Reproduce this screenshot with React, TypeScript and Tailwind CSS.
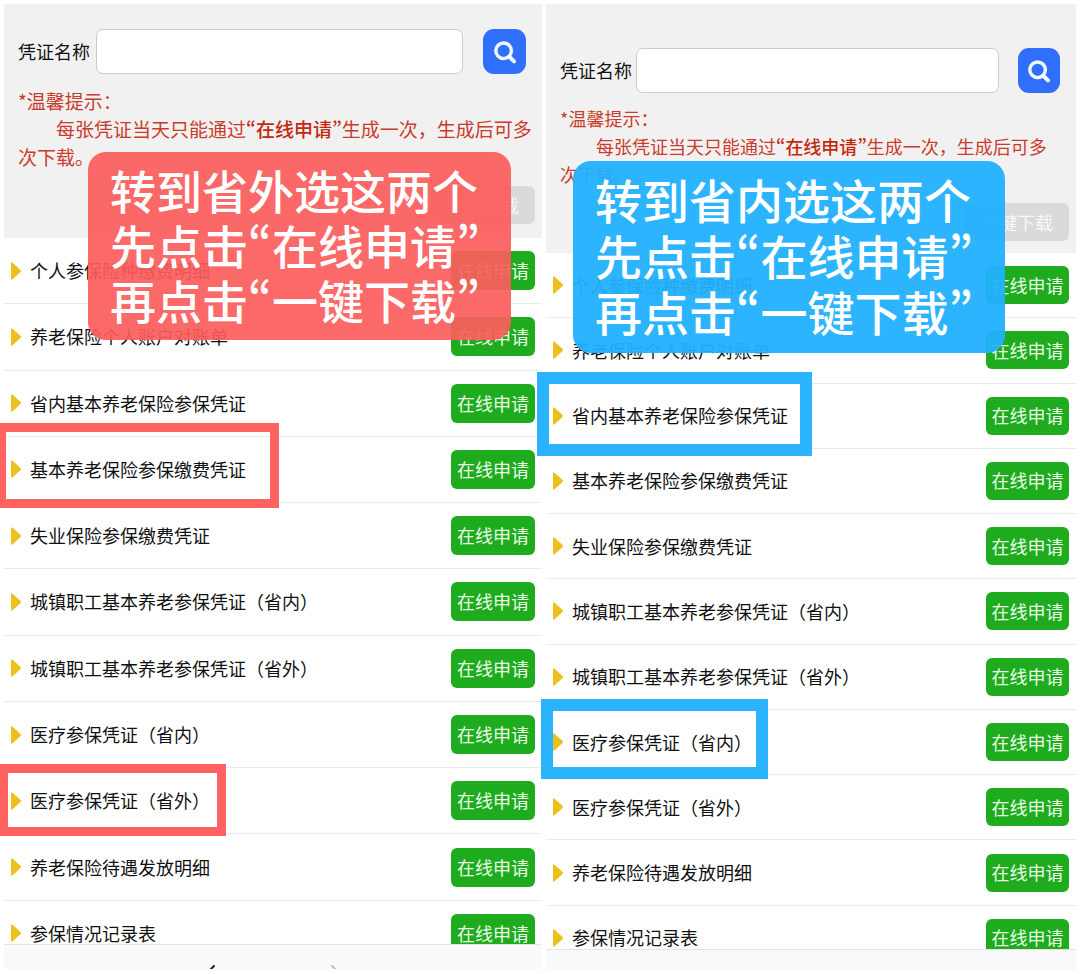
import clsx from "clsx";
import { ChevronLeft, ChevronRight } from "lucide-react";

const certificates = [
  "个人参保险种缴费明细",
  "养老保险个人账户对账单",
  "省内基本养老保险参保凭证",
  "基本养老保险参保缴费凭证",
  "失业保险参保缴费凭证",
  "城镇职工基本养老参保凭证（省内）",
  "城镇职工基本养老参保凭证（省外）",
  "医疗参保凭证（省内）",
  "医疗参保凭证（省外）",
  "养老保险待遇发放明细",
  "参保情况记录表",
];

type Variant = {
  id: string;
  target: string;
  header: string;
  searchRow: string;
  input: string;
  searchButton: string;
  notice: string;
  viewport: string;
  list: string;
  apply: string;
  footer: string;
  callout: string;
  frames: string[];
  showNav: boolean;
};

const outside: Variant = {
  id: "outside",
  target: "省外",
  header: "h-[234px] pt-[25px]",
  searchRow: "gap-[6px]",
  input: "mr-[14px]",
  searchButton: "w-[43px]",
  notice: "mt-[13px] text-[19px]",
  viewport: "h-[706px]",
  list: "h-[729px]",
  apply: "h-[39px] w-[84px]",
  footer: "h-[25px]",
  callout:
    "left-[84px] top-[148px] h-[188px] w-[423px] rounded-[18px] bg-[#fc5c5c]/92 pt-[10px] text-[46px] leading-[55px]",
  frames: [
    "-left-1 top-[419px] h-[85px] w-[279px] border-[9px] border-l-[6px] border-[#fe6361]",
    "-left-1 top-[760px] h-[72px] w-[226px] border-[9px] border-l-8 border-[#fe6361]",
  ],
  showNav: true,
};

const inside: Variant = {
  id: "inside",
  target: "省内",
  header: "h-[249px] pt-11",
  searchRow: "gap-1",
  input: "mr-[15px]",
  searchButton: "w-[42px]",
  notice: "mt-[11px] pr-4 text-[18px]",
  viewport: "h-[696px]",
  list: "h-[718px]",
  apply: "h-[38px] w-[83px]",
  footer: "h-[21px]",
  callout:
    "left-[27px] top-[157px] h-[192px] w-[432px] rounded-[18px] bg-[#22b0fe]/95 pt-[10px] text-[47px] leading-[56px]",
  frames: [
    "-left-[9px] top-[368px] h-[84px] w-[275px] border-[12px] border-[#2bb3fe]",
    "-left-[5px] top-[695px] h-[80px] w-[227px] border-[12px] border-[#2bb3fe]",
  ],
  showNav: false,
};

// Korean typesetting uses proportional curly quotes, Chinese full-width ones.
function Quoted({ children }: { children: string }) {
  return (
    <>
      <span lang="ko" className="font-['Noto_Sans_CJK_KR',sans-serif]">“</span>
      {children}
      <span lang="ko" className="font-['Noto_Sans_CJK_KR',sans-serif]">”</span>
    </>
  );
}

function SearchIcon() {
  return (
    <svg width="24" height="24" viewBox="0 0 24 24" fill="none" stroke="#f2f8ff" strokeLinecap="round" aria-hidden="true">
      <circle cx="10.6" cy="10.8" r="7.8" strokeWidth="3.4" />
      <path d="M16.6 17 21 21.4" strokeWidth="4" />
    </svg>
  );
}

function Marker() {
  return (
    <svg width="10" height="18" viewBox="0 0 10 18" className="shrink-0" aria-hidden="true">
      <path
        d="M.8 1.2 8.8 8.4Q9.4 9 8.8 9.6L.8 16.8Z"
        fill="#ecc11e"
        stroke="#ecc11e"
        strokeWidth="1.6"
        strokeLinejoin="round"
      />
    </svg>
  );
}

function Panel({ v }: { v: Variant }) {
  return (
    <section className="relative min-w-0">
      <header className={clsx("bg-[#f1f1f1] pl-[14px]", v.header)}>
        <form className={clsx("flex items-center pr-4", v.searchRow)} onSubmit={(e) => e.preventDefault()}>
          <label htmlFor={`name-${v.id}`} className="shrink-0 text-[18px] text-[#111]">
            凭证名称
          </label>
          <input
            id={`name-${v.id}`}
            type="text"
            className={clsx("h-[45px] min-w-0 flex-1 rounded-[7px] border border-[#ccc] bg-white px-3 text-[18px]", v.input)}
          />
          <button
            type="submit"
            aria-label="搜索"
            className={clsx("flex h-[45px] shrink-0 items-center justify-center rounded-[11px] bg-[#2f6ffb]", v.searchButton)}
          >
            <SearchIcon />
          </button>
        </form>

        <div className={clsx("leading-[28px] text-[#c93c2b]", v.notice)}>
          <p>*温馨提示：</p>
          <p className="indent-[2em]">
            每张凭证当天只能通过
            <strong className="font-medium text-[#c4280f]">
              <Quoted>在线申请</Quoted>
            </strong>
            生成一次，生成后可多次下载。
          </p>
        </div>

        <div className="mt-[15px] flex justify-end pr-[7px]">
          <button type="button" className="h-[38px] rounded-md bg-[#dadada] px-4 text-[18px] text-[#f8f8f8]">
            一键下载
          </button>
        </div>
      </header>

      <div className={clsx("overflow-hidden", v.viewport)}>
        <ul className={clsx("grid auto-rows-fr", v.list)}>
          {certificates.map((name) => (
            <li key={name} className="flex items-center gap-[9px] border-b border-[#ebebeb] px-[7px]">
              <Marker />
              <span className="flex-1 whitespace-nowrap text-[18px] text-[#111]">{name}</span>
              <button
                type="button"
                className={clsx("shrink-0 rounded-md bg-[#1eab1d] text-[18px] text-[#eafbe8]", v.apply)}
              >
                在线申请
              </button>
            </li>
          ))}
        </ul>
      </div>

      <footer className={clsx("overflow-hidden border-t border-[#e4e4e6] bg-[#f9f9fb]", v.footer)}>
        {v.showNav && (
          <nav className="flex gap-[100px] pl-[195px] pt-[15px]">
            <ChevronLeft size={24} className="shrink-0 text-[#222]" />
            <ChevronRight size={24} className="shrink-0 text-[#bbb]" />
          </nav>
        )}
      </footer>

      {v.frames.map((frame) => (
        <div key={frame} className={clsx("pointer-events-none absolute", frame)} />
      ))}

      <div className={clsx("absolute whitespace-nowrap pl-[22px] font-medium text-white", v.callout)}>
        <p>转到{v.target}选这两个</p>
        <p>
          先点击<Quoted>在线申请</Quoted>
        </p>
        <p>
          再点击<Quoted>一键下载</Quoted>
        </p>
      </div>
    </section>
  );
}

export default function App() {
  return (
    <main
      lang="zh-CN"
      className="grid grid-cols-[538fr_530fr] gap-1 bg-white p-1 font-['Noto_Sans_CJK_SC',sans-serif]"
    >
      <Panel v={outside} />
      <Panel v={inside} />
    </main>
  );
}
